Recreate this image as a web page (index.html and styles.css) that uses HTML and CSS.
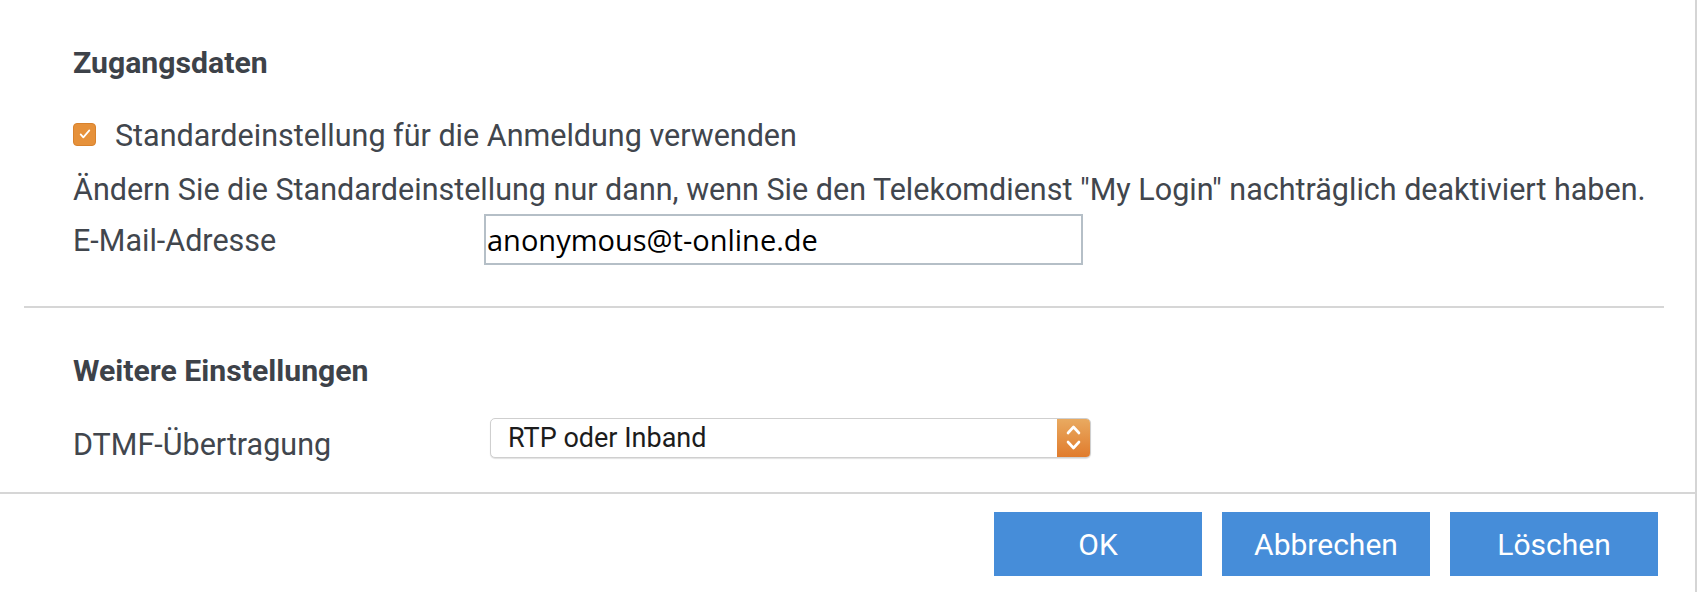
FILE: index.html
```html
<!DOCTYPE html>
<html lang="de">
<head>
<meta charset="utf-8">
<title>Zugangsdaten</title>
<link rel="stylesheet" href="styles.css">
</head>
<body>
<div class="dialog">
  <main class="panel">
    <section class="sec sec-access">
      <h2 class="sec-title">Zugangsdaten</h2>
      <label class="check-row">
        <span class="checkbox"><svg viewBox="0 0 24 24" width="16" height="16"><path d="M5.5 12.5l4 4.5L18.5 6.5" fill="none" stroke="#fff" stroke-width="2.6" stroke-linecap="round" stroke-linejoin="round"/></svg></span>
        <span class="check-text">Standardeinstellung für die Anmeldung verwenden</span>
      </label>
      <p class="note">Ändern Sie die Standardeinstellung nur dann, wenn Sie den Telekomdienst "My Login" nachträglich deaktiviert haben.</p>
      <div class="field field-mail">
        <span class="label">E-Mail-Adresse</span>
        <div class="input">anonymous@t-online.de</div>
      </div>
    </section>
    <hr class="divider">
    <section class="sec sec-more">
      <h2 class="sec-title">Weitere Einstellungen</h2>
      <div class="field field-dtmf">
        <span class="label">DTMF-Übertragung</span>
        <div class="select">
          <span class="select-value">RTP oder Inband</span>
          <span class="stepper"><svg viewBox="0 0 33 40" width="33" height="40"><path d="M11 15l5.5-6 5.5 6M11 24l5.5 6 5.5-6" fill="none" stroke="#fff" stroke-width="2.6" stroke-linecap="round" stroke-linejoin="round"/></svg></span>
        </div>
      </div>
    </section>
  </main>
  <footer class="actions">
    <button class="btn">OK</button>
    <button class="btn">Abbrechen</button>
    <button class="btn">Löschen</button>
  </footer>
</div>
</body>
</html>
```

FILE: styles.css
```css
html, body {
  margin: 0;
  padding: 0;
  background: #fff;
}
body {
  width: 1698px;
  height: 592px;
  overflow: hidden;
  font-family: "Roboto", "Noto Sans", sans-serif;
  font-size: 30.5px;
  color: #41464d;
}
.dialog {
  width: 1695px;
  height: 592px;
  border-right: 2px solid #d5d5d5;
  display: flex;
  flex-direction: column;
}
.panel {
  padding-bottom: 34px;
}
.sec {
  padding-left: 73px;
}
.sec-title {
  margin: 0;
  padding: 43px 0 2px;
  font-size: 30.2px;
  font-weight: 700;
  line-height: 40px;
  height: 40px;
  color: #3d4249;
}
.check-row {
  display: flex;
  align-items: center;
  height: 40px;
  margin-top: 31px;
}
.checkbox {
  width: 23px;
  height: 23px;
  box-sizing: border-box;
  border-radius: 4px;
  background: #e6913a;
  border: 1px solid #d8822d;
  display: flex;
  align-items: center;
  justify-content: center;
  margin-right: 19px;
  margin-top: -4px;
}
.check-text { line-height: 40px; }
.note {
  margin: 14px 0 0;
  line-height: 40px;
  height: 40px;
  white-space: nowrap;
}
.field {
  display: grid;
  grid-template-columns: 411px auto;
  align-items: center;
}
.field-mail { margin-top: 4px; grid-template-rows: 51px; }
.field-dtmf { margin-top: 25px; grid-template-rows: 40px; }
.label { line-height: 40px; }
.field-mail .label { margin-top: 2px; }
.field-dtmf .label { margin-top: 14px; }
.input {
  width: 599px;
  height: 51px;
  box-sizing: border-box;
  border: 2px solid #b5bfc7;
  padding-left: 1px;
  font-family: "Open Sans", sans-serif;
  font-size: 29px;
  line-height: 47px;
  color: #000;
}
.divider {
  margin: 41px 31px 0 24px;
  border: 0;
  height: 2px;
  background: #d6d6d6;
}
.select {
  margin-left: 6px;
  width: 601px;
  height: 40px;
  box-sizing: border-box;
  border: 1px solid #cfcfcf;
  border-radius: 5px;
  box-shadow: 0 1px 1px rgba(0,0,0,0.12);
  display: flex;
  align-items: center;
  overflow: hidden;
  background: #fff;
}
.select-value {
  flex: 1;
  padding-left: 17px;
  font-size: 27px;
  color: #1c1c1c;
}
.stepper {
  width: 33px;
  height: 40px;
  background: linear-gradient(#e9ab62, #e07a2b);
  display: flex;
}
.actions {
  border-top: 2px solid #d6d6d6;
  display: flex;
  justify-content: flex-end;
  gap: 20px;
  padding: 18px 37px 0 0;
}
.btn {
  width: 208px;
  height: 64px;
  border: 0;
  border-radius: 0;
  background: #468dd9;
  color: #fff;
  font-family: "Roboto", sans-serif;
  font-size: 30px;
  padding: 0;
}
```
